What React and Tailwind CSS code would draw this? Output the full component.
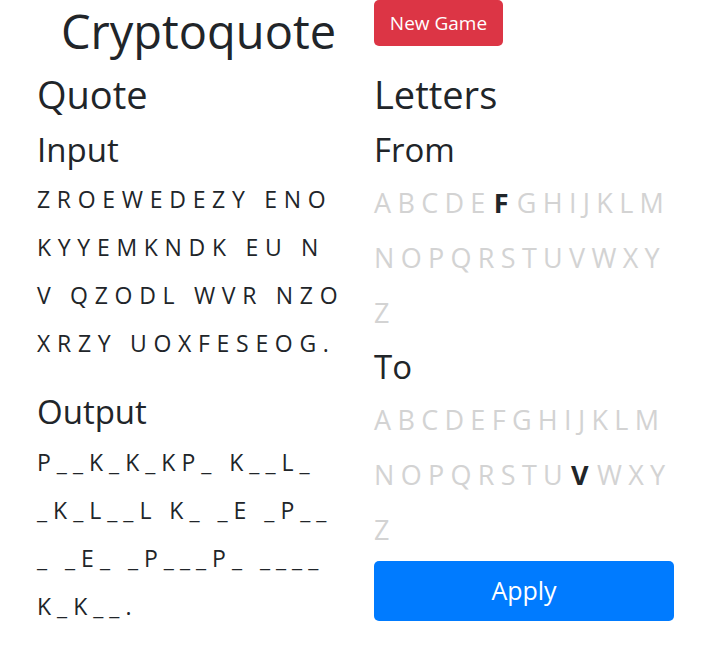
const INPUT_LINES = ['ZROEWEDEZY ENO', 'KYYEMKNDK EU N', 'V QZODL WVR NZO', 'XRZY UOXFESEOG.']
const OUTPUT_LINES = ['P__K_K_KP_ K__L_', '_K_L__L K_ _E _P__', '_ _E_ _P___P_ ____', 'K_K__.']
const ALPHA_ROWS = ['ABCDEFGHIJKLM', 'NOPQRSTUVWXY', 'Z']

function TextLines({ lines, tracking }) {
  return (
    <div className={`text-[23px] whitespace-pre ${tracking}`}>
      {lines.map((l, i) => (
        <div key={i} className="h-[48px] leading-[48px]">
          {l}
        </div>
      ))}
    </div>
  )
}

function Alphabet({ active }) {
  return (
    <div className="mt-[3px] text-[27px] tracking-[6.3px] text-[#d3d3d3]">
      {ALPHA_ROWS.map((row, i) => (
        <div key={i} className="h-[55px] leading-[55px] whitespace-nowrap">
          {row.split('').map((c) => (
            <span key={c} className={c === active ? 'font-bold text-[#212529] mx-[2px]' : ''}>
              {c}
            </span>
          ))}
        </div>
      ))}
    </div>
  )
}

export default function App() {
  return (
    <div className="min-h-screen bg-white text-[#212529] font-['Open_Sans',sans-serif]">
      <div className="flex pl-[37px] gap-[14px]">
        <div className="w-[323px]">
          <h1 className="text-center text-[47px] leading-[62px] font-normal">Cryptoquote</h1>
        </div>
        <div>
          <button className="w-[129px] h-[46px] rounded-[5px] bg-[#dc3545] text-white text-[19px] leading-[30px]">
            New Game
          </button>
        </div>
      </div>

      <div className="flex pl-[37px] gap-[14px]">
        <div className="w-[323px]">
          <h2 className="text-[38px] leading-[65px] font-normal">Quote</h2>
          <h3 className="text-[33px] leading-[45px] font-normal">Input</h3>
          <div className="mt-[3px]">
            <TextLines lines={INPUT_LINES} tracking="tracking-[6.7px]" />
          </div>
          <h3 className="mt-[22px] text-[33px] leading-[45px] font-normal">Output</h3>
          <div className="mt-[4px]">
            <TextLines lines={OUTPUT_LINES} tracking="tracking-[6px]" />
          </div>
        </div>

        <div className="w-[300px]">
          <h2 className="text-[38px] leading-[65px] font-normal">Letters</h2>
          <h3 className="text-[33px] leading-[45px] font-normal">From</h3>
          <Alphabet active="F" />
          <h3 className="mt-[4px] text-[33px] leading-[45px] font-normal">To</h3>
          <Alphabet active="V" />
          <button className="mt-[4px] w-[300px] h-[60px] rounded-[5px] bg-[#007bff] text-white text-[25px]">
            Apply
          </button>
        </div>
      </div>
    </div>
  )
}
